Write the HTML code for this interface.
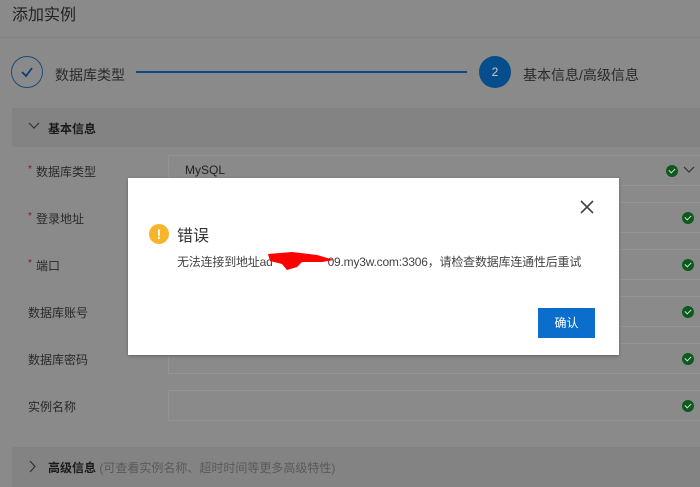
<!DOCTYPE html>
<html><head><meta charset="utf-8"><style>
*{margin:0;padding:0;box-sizing:border-box}
body{width:700px;height:487px;overflow:hidden;background:#8a8a8a;font-family:"Liberation Sans","Noto Sans CJK SC",sans-serif;position:relative;color:#2a2a2a}
.a{position:absolute}
.lbl{position:absolute;left:28px;font-size:12px;color:#2a2a2a}
.star{position:absolute;left:28px;color:#8a1010;font-size:10px}
.inp{position:absolute;left:168px;width:540px;height:31px;border:1px solid #939393;background:#8a8a8a}
.ok{position:absolute;left:682px;width:12px;height:12px;border-radius:50%;background:#0c5a1c}
.ok:after{content:"";position:absolute;left:3px;top:3px;width:5px;height:3px;border-left:1.5px solid #ddd;border-bottom:1.5px solid #ddd;transform:rotate(-45deg)}
</style></head><body>
<div class="a" style="left:12px;top:1px;font-size:16px;color:#222">添加实例</div>
<div class="a" style="left:0;top:37px;width:700px;height:1px;background:#828282"></div>
<div class="a" style="left:11px;top:56px;width:32px;height:32px;border-radius:50%;border:1.5px solid #1d4c7c"></div>
<svg class="a" style="left:19px;top:64px" width="16" height="16"><path d="M3 8 L7 12 L13 4" stroke="#0c3f78" stroke-width="1.8" fill="none"/></svg>
<div class="a" style="left:55px;top:65px;font-size:14px;color:#2a2a2a">数据库类型</div>
<div class="a" style="left:136px;top:71px;width:331px;height:2px;background:#0f4c86"></div>
<div class="a" style="left:479px;top:56px;width:32px;height:32px;border-radius:50%;background:#064d8c;color:#ccc;font-size:12px;text-align:center;line-height:32px">2</div>
<div class="a" style="left:523px;top:65px;font-size:14px;color:#2a2a2a">基本信息/高级信息</div>
<div class="a" style="left:12px;top:108px;width:688px;height:39px;background:#838383"></div>
<svg class="a" style="left:28px;top:121px" width="12" height="10"><path d="M1 2 L6 7 L11 2" stroke="#333" stroke-width="1.2" fill="none"/></svg>
<div class="a" style="left:48px;top:120px;font-size:12px;font-weight:bold;color:#1a1a1a">基本信息</div>

<span class="star" style="top:164px">*</span><div class="lbl" style="left:36px;top:163px">数据库类型</div>
<div class="inp" style="top:155px"></div><div class="a" style="left:185px;top:163px;font-size:12px;color:#222">MySQL</div>
<div class="ok" style="left:666px;top:165px"></div>
<svg class="a" style="left:682px;top:165px" width="14" height="10"><path d="M2 2 L7 7 L12 2" stroke="#333" stroke-width="1.2" fill="none"/></svg>

<span class="star" style="top:211px">*</span><div class="lbl" style="left:36px;top:210px">登录地址</div>
<div class="inp" style="top:202px"></div><div class="ok" style="top:212px"></div>
<span class="star" style="top:258px">*</span><div class="lbl" style="left:36px;top:257px">端口</div>
<div class="inp" style="top:249px"></div><div class="ok" style="top:259px"></div>
<div class="lbl" style="top:304px">数据库账号</div>
<div class="inp" style="top:296px"></div><div class="ok" style="top:306px"></div>
<div class="lbl" style="top:351px">数据库密码</div>
<div class="inp" style="top:343px"></div><div class="ok" style="top:353px"></div>
<div class="a" style="left:185px;top:348px;font-size:10px;color:#111">•••••••••</div>
<div class="lbl" style="top:398px">实例名称</div>
<div class="inp" style="top:390px"></div><div class="ok" style="top:400px"></div>

<div class="a" style="left:12px;top:447px;width:688px;height:40px;background:#838383"></div>
<svg class="a" style="left:28px;top:460px" width="10" height="14"><path d="M2 1 L7 6.5 L2 12" stroke="#333" stroke-width="1.2" fill="none"/></svg>
<div class="a" style="left:48px;top:459px;font-size:12px;color:#5a5a5a"><b style="color:#1a1a1a">高级信息</b> (可查看实例名称、超时时间等更多高级特性)</div>

<div class="a" style="left:128px;top:178px;width:491px;height:177px;background:#fff;box-shadow:0 1px 3px rgba(0,0,0,.3)"></div>
<svg class="a" style="left:579px;top:199px" width="16" height="16"><path d="M2 2 L14 14 M14 2 L2 14" stroke="#444" stroke-width="1.6"/></svg>
<div class="a" style="left:149px;top:224px;width:20px;height:20px;border-radius:50%;background:#f7b52c;color:#fff;font-weight:bold;font-size:14px;text-align:center;line-height:20px">!</div>
<div class="a" style="left:177px;top:222px;font-size:16px;color:#333">错误</div>
<div class="a" style="left:177px;top:253px;font-size:12px;color:#444;white-space:nowrap;letter-spacing:-0.2px">无法连接到地址ad<span style="display:inline-block;width:55px"></span>09.my3w.com:3306，请检查数据库连通性后重试</div>
<svg class="a" style="left:262px;top:250px" width="80" height="24"><path d="M6 4 L30 2 L55 5 L72 10 L60 12 L40 12 L35 17 L25 20 L20 14 L8 11 Z" fill="#f00"/></svg>
<div class="a" style="left:538px;top:308px;width:57px;height:30px;background:#0b6dcc;color:#fff;font-size:12px;text-align:center;line-height:30px">确认</div>
</body></html>
